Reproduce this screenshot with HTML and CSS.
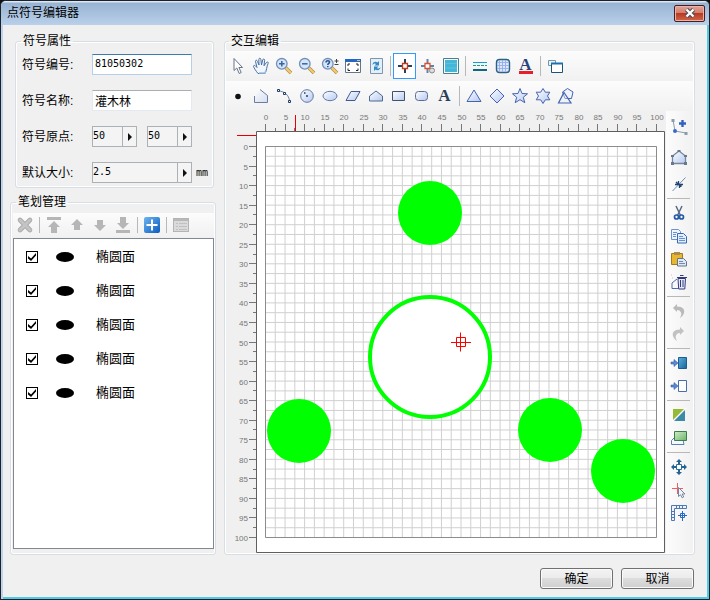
FILE: index.html
```html
<!DOCTYPE html>
<html lang="zh-CN">
<head>
<meta charset="utf-8">
<title>点符号编辑器</title>
<link rel="stylesheet" href="styles.css">
</head>
<body>
<svg class="defs" aria-hidden="true">
  <defs>
    <linearGradient id="soft" x1="0" y1="0" x2="1" y2="1"><stop offset="0" stop-color="#fff"/><stop offset="1" stop-color="#b5c9f0"/></linearGradient>
    <linearGradient id="teal" x1="0" y1="0" x2="1" y2="1"><stop offset="0" stop-color="#5cb0dc"/><stop offset="1" stop-color="#1a649c"/></linearGradient>
    <linearGradient id="blue" x1="0" y1="0" x2="1" y2="1"><stop offset="0" stop-color="#6fb4f0"/><stop offset="1" stop-color="#0a5cc0"/></linearGradient>
    <linearGradient id="green" x1="0" y1="0" x2="1" y2="1"><stop offset="0" stop-color="#d0ecc8"/><stop offset="1" stop-color="#6db56a"/></linearGradient>
    <g id="lens"><path d="M11 11l5 5" stroke="#a58a50" stroke-width="3.600"/><path d="M11 11l5 5" stroke="#f5c96b" stroke-width="2.400"/><circle cx="6.800" cy="6.800" r="5.300" fill="#d3e5fa" stroke="#7590b8" stroke-width="1.300"/></g>
  </defs>
</svg>
<div class="window">
  <header class="titlebar">
    <h1>点符号编辑器</h1>
    <button class="close" aria-label="关闭"><svg width="12" height="10" viewBox="0 0 12 10"><path d="M2.500 1.500l7 7M9.500 1.500l-7 7" stroke="#4a4a5c" stroke-width="4.400"/><path d="M2.500 1.500l7 7M9.500 1.500l-7 7" stroke="#fff" stroke-width="2.400"/></svg></button>
  </header>

  <main class="content">
    <div class="left">
      <fieldset class="group props">
        <legend>符号属性</legend>
        <div class="form">
          <label for="code">符号编号:</label>
          <input class="text focus" id="code" value="81050302">
          <label for="name">符号名称:</label>
          <input class="text" id="name" value="灌木林">
          <label for="ox">符号原点:</label>
          <div class="pair">
            <div class="spin"><input id="ox" value="50"><button aria-label="调整横坐标"></button></div>
            <div class="spin"><input aria-label="纵坐标" value="50"><button aria-label="调整纵坐标"></button></div>
          </div>
          <label for="size">默认大小:</label>
          <div class="spin"><input id="size" value="2.5"><button aria-label="调整大小"></button></div>
          <span class="unit">mm</span>
        </div>
      </fieldset>

      <fieldset class="group strokes">
        <legend>笔划管理</legend>
        <div class="bar small">
          <button aria-label="删除"><svg viewBox="0 0 18 18"><path d="M4 4l10 10M14 4L4 14" stroke="#a8a8a8" stroke-width="4.600" stroke-linecap="round"/><path d="M4 4l10 10M14 4L4 14" stroke="#c4c4c4" stroke-width="3" stroke-linecap="round"/></svg></button>
          <i class="sep"></i>
          <button aria-label="置顶"><svg viewBox="0 0 18 18"><path d="M2 1h14v3H2zM9 5l6 6h-3v6H6v-6H3z" fill="#b6b6b6"/></svg></button>
          <button aria-label="上移"><svg viewBox="0 0 18 18"><path d="M9 3l6 6h-3v5H6V9H3z" fill="#b6b6b6"/></svg></button>
          <button aria-label="下移"><svg viewBox="0 0 18 18"><path d="M9 15l6-6h-3V4H6v5H3z" fill="#b6b6b6"/></svg></button>
          <button aria-label="置底"><svg viewBox="0 0 18 18"><path d="M9 13l6-6h-3V1H6v6H3zM2 14h14v3H2z" fill="#b6b6b6"/></svg></button>
          <i class="sep"></i>
          <button aria-label="添加"><svg viewBox="0 0 18 18"><rect x="1" y="1" width="16" height="16" rx="2" fill="url(#blue)"/><path d="M9 3.500v11M3.500 9h11" stroke="#fff" stroke-width="2"/></svg></button>
          <i class="sep"></i>
          <button aria-label="属性"><svg viewBox="0 0 18 18"><rect x="1.500" y="2.500" width="15" height="13" fill="#dadada" stroke="#b4b4b4"/><path d="M2 4h14" stroke="#b8b8b8" stroke-width="2"/><path d="M4 7.500h2M4 10.500h2M4 13.500h2M7 7.500h8M7 10.500h8M7 13.500h8" stroke="#c0c0c0"/></svg></button>
        </div>
        <ul class="list">
          <li><label><input type="checkbox" checked><span class="dot"></span>椭圆面</label></li>
          <li><label><input type="checkbox" checked><span class="dot"></span>椭圆面</label></li>
          <li><label><input type="checkbox" checked><span class="dot"></span>椭圆面</label></li>
          <li><label><input type="checkbox" checked><span class="dot"></span>椭圆面</label></li>
          <li><label><input type="checkbox" checked><span class="dot"></span>椭圆面</label></li>
        </ul>
      </fieldset>
    </div>

    <fieldset class="group editor">
      <legend>交互编辑</legend>
      <div class="bar">
        <button aria-label="选择"><svg viewBox="0 0 18 18"><path d="M5 1.500v12l2.800-2.500 2.400 5.500 2-1-2.300-5H13.500z" fill="#fff" stroke="#66758c"/></svg></button>
        <button aria-label="平移"><svg viewBox="0 0 18 18"><path d="M6 16.500C4 14 2 11 1.500 9.500c0-1.500 1.500-1.500 2.500 0l1 1L3.500 4.500c0-1.800 1.500-1.700 2 0L7 8 6.800 2.500c0-1.700 1.900-1.700 2.100 0L9.500 8l1.200-5c.4-1.500 2-1.200 1.900.3L12 8.800l2.300-3.200c1-1.300 2.400-.5 1.800.9C14.500 9.500 15 13 13 16.500z" fill="#f2f7ff" stroke="#4a70a0"/><path d="M7 16h6l1-3" stroke="#a0bce0" fill="none" stroke-width="1.500"/></svg></button>
        <button aria-label="放大"><svg viewBox="0 0 18 18"><use href="#lens"/><path d="M6.800 4v5.600M4 6.800h5.600" stroke="#3c639c" stroke-width="1.500"/></svg></button>
        <button aria-label="缩小"><svg viewBox="0 0 18 18"><use href="#lens"/><path d="M4 6.800h5.600" stroke="#3c639c" stroke-width="1.500"/></svg></button>
        <button aria-label="缩放比例"><svg viewBox="0 0 18 18"><use href="#lens"/><path d="M5 5.500C5 3 8.800 3.200 8.500 5.300 8.300 6.500 6.800 6.500 6.800 8M6.800 9v1.300" fill="none" stroke="#2a5288" stroke-width="1.500"/><path d="M15.500 2v4M13.500 4h4M13.500 7.500h4" stroke="#444"/></svg></button>
        <button aria-label="全屏"><svg viewBox="0 0 18 18"><path d="M1.500 2.500h15v13h-15z" fill="#fff" stroke="#67758c"/><path d="M1 3.500h16" stroke="#2466c4" stroke-width="3"/><path d="M13 3.500h3" stroke="#e9c480"/><path d="M4 9V7h2M12 7h2v2M4 11.500v2h2M12 13.500h2v-2" fill="none" stroke="#222"/></svg></button>
        <button aria-label="刷新"><svg viewBox="0 0 18 18"><path d="M3.500 1.500h12v15h-12z" fill="#e2f0fa" stroke="#8095ad"/><path d="M5.500 8c0-3 3-4 5-2.500L12 4v4.500H7.500L9 7c-1-1-2.500-.5-3.500 1zM13.500 10c0 3-3 4-5 2.500L7 14V9.500h4.500L10 11c1 1 2.500.5 3.500-1z" fill="#3588c0"/></svg></button>
        <i class="sep"></i>
        <button class="active" aria-label="原点"><svg viewBox="0 0 18 18"><path d="M9 2v4M9 12v4M2 9h4M12 9h4" stroke="#26415c" stroke-width="2"/><path d="M6.500 6.500h5v5h-5z" fill="#fff" stroke="#c93a1a" stroke-width="1.300"/></svg></button>
        <button aria-label="原点设置"><svg viewBox="0 0 18 18"><path d="M8.500 2v4M8.500 12v4M2 9h4M11 9h4" stroke="#5a86ac" stroke-width="2"/><path d="M6 6.500h5v5H6z" fill="#fff" stroke="#dc5030" stroke-width="1.300"/><circle cx="13" cy="13.500" r="2.500" fill="#ddd" stroke="#888"/></svg></button>
        <button aria-label="背景"><svg viewBox="0 0 18 18"><path d="M1.500 1.500h15v15h-15z" fill="#fff" stroke="#478094"/><path d="M3 3h12v12H3z" fill="#43b7d7"/><path d="M3 7c5-2 7 1 12-1M3 11h12" stroke="#62c4de" fill="none"/></svg></button>
        <i class="sep"></i>
        <button aria-label="线型"><svg viewBox="0 0 18 18"><path d="M2 5.500h14" stroke="#109fd0"/><path d="M2 8.500h14" stroke="#16a08c" stroke-dasharray="3 1"/><path d="M2 13h14" stroke="#126780" stroke-width="2"/></svg></button>
        <button aria-label="填充"><svg viewBox="0 0 18 18"><rect x="2.500" y="2.500" width="13" height="13" rx="3" fill="#dce8ff" stroke="#2d6280" stroke-width="1.400"/><path d="M5.500 3v12M8.500 3v12M11.500 3v12M3 5.500h12M3 8.500h12M3 11.500h12" stroke="#9bb2e8"/></svg></button>
        <button class="glyph underline" aria-label="文字颜色">A</button>
        <i class="sep"></i>
        <button aria-label="窗口"><svg viewBox="0 0 18 18"><path d="M2.500 3.500h7v5h-7z" fill="#e8f3fa" stroke="#7095ac"/><path d="M5.500 6.500h11v9h-11z" fill="#fff" stroke="#1c5274"/><path d="M5 6.500h12" stroke="#1c72b0" stroke-width="2"/></svg></button>
      </div>
      <div class="bar">
        <button aria-label="点"><svg viewBox="0 0 18 18"><circle cx="9" cy="9.500" r="2.800" fill="#111"/></svg></button>
        <button aria-label="折线"><svg viewBox="0 0 18 18"><path d="M8 2.500l7.500 6v7H2.500V9" fill="url(#soft)" stroke="none" opacity=".5"/><path d="M8 2.500l7.500 6v7H2.500V9" fill="none" stroke="#6b7c9c"/></svg></button>
        <button aria-label="曲线"><svg viewBox="0 0 18 18"><path d="M3.500 4C9 4 14 8 14.500 14" fill="none" stroke="#6b7f9c"/><path d="M2.500 2.500h2v2h-2zM8.500 5.500h2v2h-2zM13.500 13.500h2v2h-2z" fill="#fff" stroke="#1e3c68"/></svg></button>
        <button aria-label="圆"><svg viewBox="0 0 18 18"><circle cx="9" cy="9" r="6.300" fill="url(#soft)" stroke="#6079a8"/><path d="M8 9h2M6 6h1.500" stroke="#243c70" stroke-width="1.500"/></svg></button>
        <button aria-label="椭圆"><svg viewBox="0 0 18 18"><ellipse cx="9" cy="9" rx="7" ry="4.700" fill="url(#soft)" stroke="#6079a8"/></svg></button>
        <button aria-label="平行四边形"><svg viewBox="0 0 18 18"><path d="M7 4.500h9l-5 9H2z" fill="url(#soft)" stroke="#405b90"/></svg></button>
        <button aria-label="多边形"><svg viewBox="0 0 18 18"><path d="M2.500 14V9l6.500-5 6.500 5v5z" fill="url(#soft)" stroke="#506894"/></svg></button>
        <button aria-label="矩形"><svg viewBox="0 0 18 18"><path d="M2.500 4.500h12v9h-12z" fill="url(#soft)" stroke="#405070"/></svg></button>
        <button aria-label="圆角矩形"><svg viewBox="0 0 18 18"><rect x="2.500" y="4.500" width="12" height="9" rx="3" fill="url(#soft)" stroke="#586c96"/></svg></button>
        <button class="glyph" aria-label="文字">A</button>
        <i class="sep"></i>
        <button aria-label="三角形"><svg viewBox="0 0 18 18"><path d="M9 3l7 11.500H2z" fill="url(#soft)" stroke="#4564b0"/></svg></button>
        <button aria-label="菱形"><svg viewBox="0 0 18 18"><path d="M9 2l7 7-7 7-7-7z" fill="url(#soft)" stroke="#4564b0"/></svg></button>
        <button aria-label="五角星"><svg viewBox="0 0 18 18"><path d="M9 1.500l2 5 5.500.3-4.200 3.500 1.500 5.400L9 12.700l-4.800 3 1.500-5.400L1.500 6.800 7 6.500z" fill="url(#soft)" stroke="#4564b0"/></svg></button>
        <button aria-label="六角星"><svg viewBox="0 0 18 18"><path d="M9 1.500l2.300 3.700h4.500L13.500 9l2.300 3.800h-4.500L9 16.500l-2.300-3.700H2.200L4.500 9 2.200 5.200h4.500z" fill="url(#soft)" stroke="#4564b0"/></svg></button>
        <button aria-label="组合图形"><svg viewBox="0 0 18 18"><path d="M10.500 1.500l5.500 3.500-1.500 6.500H8L5.500 5z" fill="#eef3ff" stroke="#4564b0"/><path d="M7 5.500l7 10.500H1.500z" fill="#e7efff" fill-opacity=".4" stroke="#4564b0" stroke-width="1.200"/></svg></button>
      </div>
      <div class="workspace">
        <div class="board">
          <svg id="canvas" viewBox="-1 0 440 442" role="img" aria-label="符号画布">
            <path class="sheet" d="M29.500 441.500V20.500h408V441.500z"/>
            <g id="grid"></g>
            <path class="frame" d="M38.500 35.500h391v391h-391z"/>
            <g id="rulers"></g>
            <path class="cursor" d="M68.500 4v16M10 24.500h19"/>
            <circle class="fill" cx="203" cy="102" r="32"/>
            <circle class="ring" cx="203" cy="246" r="60"/>
            <circle class="fill" cx="72" cy="320" r="32"/>
            <circle class="fill" cx="323" cy="319" r="32"/>
            <circle class="fill" cx="396" cy="360" r="32"/>
            <path class="origin" d="M229.500 226.500h9v9h-9zM233.500 221.500v19M224 231.500h20"/>
          </svg>
        </div>
        <div class="side">
          <button class="tall" aria-label="添加节点"><svg viewBox="0 0 18 18"><path d="M3 2l2 11 11 2" stroke="#8d9caf" fill="none"/><path d="M1.500 1h3v3h-3zM14.500 14h3v3h-3z" fill="#8a9bad"/><circle cx="5" cy="13" r="2" fill="#3c68cc"/><path d="M12.500 2v7M9 5.500h7" stroke="#3261c0" stroke-width="2.400"/></svg></button>
          <button class="tall" aria-label="编辑节点"><svg viewBox="0 0 18 18"><path d="M2.500 15.500V8L9 3l6.500 5v7.500z" fill="url(#soft)" stroke="#76879c" stroke-width="1.300"/><path d="M1 7h3v2H1zM7.500 2h3v2h-3zM14 7h3v2h-3zM1 14h3v3H1zM14 14h3v3h-3z" fill="#65788e"/></svg></button>
          <button aria-label="打断"><svg viewBox="0 0 18 18"><path d="M2.500 16L15.500 2.500" stroke="#6c91b8"/><path d="M8.500 6v3.500H5M9.500 13v-3.500H13M8.500 9.500L6 7M9.500 9.500l2 2" stroke="#1f4470" fill="none" stroke-width="1.300"/></svg></button>
          <i class="sep"></i>
          <button aria-label="剪切"><svg viewBox="0 0 18 18"><path d="M6 2l4.500 9.500M12 2L7.500 11.500" stroke="#566b85" stroke-width="1.500"/><circle cx="6.500" cy="13" r="2" fill="none" stroke="#245ba8" stroke-width="1.700"/><circle cx="11.500" cy="13" r="2" fill="none" stroke="#245ba8" stroke-width="1.700"/></svg></button>
          <button aria-label="复制"><svg viewBox="0 0 18 18"><path d="M1.500 2.500h7l2 2v8h-9z" fill="#eef5ff" stroke="#6d94cc"/><path d="M7.500 6.500h6l3 3v6.500h-9z" fill="#e3efff" stroke="#3568b5"/><path d="M3 5.500h4M3 7.500h3M3 9.500h3M9 9.500h4M9 11.500h6M9 13.500h6" stroke="#6992cc"/></svg></button>
          <button aria-label="粘贴"><svg viewBox="0 0 18 18"><path d="M1.500 3.500h11v11h-11z" fill="#e9b72f" stroke="#a5791c"/><path d="M4 2h6v3H4z" fill="#a98d50"/><path d="M7.500 8.500h6l3 3v4.500h-9z" fill="#dfe8f4" stroke="#607792"/><path d="M9 11.500h4M9 13.500h6" stroke="#768da8"/></svg></button>
          <button aria-label="删除图形"><svg viewBox="0 0 18 18"><path d="M2 15.500V10l5-4M2 15.500h6" fill="none" stroke="#476fb0"/><path d="M8 5.500h7.500l-.7 10.500H8.700z" fill="#e4e8ff" stroke="#343c78"/><path d="M7 4.500h10M10 2.500h3.500M10.500 7v7M13 7v7" stroke="#343c78"/><path d="M1 2h1M2 5h1" stroke="#e8b6a8"/></svg></button>
          <i class="sep"></i>
          <button aria-label="撤销"><svg viewBox="0 0 18 18"><path d="M3 6l4-4v2.500c6 0 8 3 7 6.500-.7 2.500-2.500 4-4 5 1-2 1.800-4 1-5.500C10.300 8.800 9 8 7 8v2z" fill="#bababa"/></svg></button>
          <button aria-label="重做"><svg viewBox="0 0 18 18"><path d="M14 6l-4-4v2.500c-6 0-8 3-7 6.500.7 2.500 2.500 4 4 5-1-2-1.800-4-1-5.500C6.700 8.800 8 8 10 8v2z" fill="#c2c2c2"/></svg></button>
          <i class="sep"></i>
          <button aria-label="导入"><svg viewBox="0 0 18 18"><path d="M8.500 3.500h8v11h-8z" fill="url(#teal)" stroke="#1c5c8c"/><path d="M1 8h3V5.500L8 9l-4 3.500V10H1z" fill="#5a88d4" stroke="#3060a8" stroke-width=".6"/></svg></button>
          <button aria-label="导出"><svg viewBox="0 0 18 18"><path d="M8.500 3.500h8v11h-8z" fill="#fff" stroke="#4a6ea8"/><path d="M1 8h3V5.500L8 9l-4 3.500V10H1z" fill="#5a88d4" stroke="#3060a8" stroke-width=".6"/></svg></button>
          <i class="sep"></i>
          <button aria-label="镜像"><svg viewBox="0 0 18 18"><path d="M3 3h11L3 14z" fill="#94ba36"/><path d="M15 4v11H4z" fill="#3b8ba8"/><path d="M2 16L16 2" stroke="#fff"/></svg></button>
          <button aria-label="图层"><svg viewBox="0 0 18 18"><path d="M1.500 15.500v-4l3-3h8l1.500 7z" fill="#f4f8ff" stroke="#5b80b5"/><path d="M4.500 2.500h12v9h-12z" fill="url(#green)" stroke="#3d7c4c"/></svg></button>
          <i class="sep"></i>
          <button aria-label="移动"><svg viewBox="0 0 18 18"><path d="M6.500 6.500h5v5h-5z" fill="#fff" stroke="#2a6b98"/><path d="M9 1l3 3h-2v2H8V4H6zM9 17l3-3h-2v-2H8v2H6zM1 9l3-3v2h2v2H4v2zM17 9l-3-3v2h-2v2h2v2z" fill="#226594"/></svg></button>
          <button aria-label="拾取"><svg viewBox="0 0 18 18"><path d="M7.500 2v11M2 7.500h11" stroke="#f06060"/><path d="M8.500 6.500v9l2-1.700 1.700 3 1.500-.8-1.500-3h2.800z" fill="#f0f4fa" stroke="#78879c"/></svg></button>
          <button aria-label="标尺"><svg viewBox="0 0 18 18"><path d="M1.500 16.500v-15h15v3h-12v12z" fill="#edf4ff" stroke="#4b7ab2"/><path d="M6.500 2v2M9.500 2v2M12.500 2v2M2 7.500h2M2 10.500h2M2 13.500h2" stroke="#4b7ab2"/><path d="M12.500 7v10M8 11.500h9M10.500 9.500h4v4h-4z" fill="none" stroke="#2669c5"/></svg></button>
        </div>
      </div>
    </fieldset>
  </main>

  <footer class="actions">
    <button>确定</button>
    <button>取消</button>
  </footer>
</div>
<script src="canvas.js"></script>
</body>
</html>
```
FILE: styles.css
```css
* { box-sizing: border-box; }

body {
  margin: 0;
  font: 12px/14px "Liberation Sans", "Noto Sans CJK SC", sans-serif;
  color: #000;
  background: #111;
}

button, input { font: inherit; color: inherit; margin: 0; padding: 0; }
button { border: 0; background: none; }
.defs { position: absolute; width: 0; height: 0; }

.window {
  display: flex;
  flex-direction: column;
  min-height: 100vh;
  border: 1px solid #1c2228;
  border-radius: 6px 6px 0 0;
  background: #f0f0f0;
  box-shadow: inset 2px 0 #bdd4ec, inset -2px 0 #4fcbe8, inset 0 -2px #4fcbe8;
}

.titlebar {
  display: flex;
  justify-content: space-between;
  align-items: center;
  height: 24px;
  padding: 0 4px 0 6px;
  border-radius: 5px 5px 0 0;
  background: linear-gradient(#dbe7f5 0 1px, #98b3d2 2px, #b9d0ea);
}
.titlebar h1 { margin: 0; font-size: 12px; font-weight: 400; }

.close {
  display: grid;
  place-items: center;
  width: 31px;
  height: 17px;
  border: 1px solid #481c24;
  border-radius: 2px;
  background: linear-gradient(#e4a394, #d27f6e 45%, #b93a22 50%, #d0664a);
  box-shadow: inset 0 0 0 1px #e9b5a9;
}

.content {
  display: flex;
  flex: 1;
  gap: 8px;
  padding: 9px 14px 0 9px;
}

.left {
  display: flex;
  flex-direction: column;
  gap: 7px;
  flex: 0 0 206px;
}

.group {
  min-width: 0;
  margin: 0;
  padding: 0 2px;
  border: 1px solid #d5dfe5;
  border-radius: 3px;
  box-shadow: inset 0 0 0 1px #fff;
}
.group legend { height: 14px; margin-left: 3px; padding: 0 2px; }

.props { margin: 0 2px 0 5px; padding: 6px 2px 4px 6px; }
.props legend { margin-left: -1px; }
.form {
  display: grid;
  grid-template-columns: 70px 1fr 19px;
  grid-auto-rows: 21px;
  gap: 15px 0;
  align-items: center;
}
.form label { grid-column: 1; }
.form .unit { padding-left: 4px; font: 10px/12px "DejaVu Sans Mono", monospace; }

.text, .spin input {
  width: 100%;
  min-width: 0;
  outline: 0;
  font: 10px/14px "DejaVu Sans Mono", "Noto Sans CJK SC", monospace;
}
.text {
  height: 21px;
  padding: 0 2px 2px;
  border: 1px solid #e3e9ef;
  border-top-color: #abadb3;
  background: #fff;
}
#name { font-size: 12px; padding-bottom: 0; }
.text.focus { border-color: #b5cfe7; border-top-color: #3d7bad; }

.pair { display: grid; grid-template-columns: 1fr 1fr; gap: 10px; }
.spin {
  display: flex;
  height: 21px;
  border: 1px solid #abb1b5;
  background: #f4f4f4;
}
.spin input { flex: 1; padding: 0 0 2px; border: 0; background: none; }
.spin button {
  display: grid;
  place-items: center;
  flex: 0 0 14px;
  border-left: 1px solid #abb1b5;
}
.spin button::before {
  content: "";
  border: 4px solid transparent;
  border-right: 0;
  border-left-color: #111;
}

.strokes { display: flex; flex-direction: column; flex: 1; padding: 4px 1px 5px 2px; }

.bar {
  display: flex;
  align-items: center;
  height: 30px;
  background: linear-gradient(#fcfcfc, #f1f1f1);
}
.bar.small { height: 24px; margin-bottom: 1px; }
.bar button, .side button {
  display: grid;
  place-items: center;
  flex: 0 0 23px;
  height: 26px;
}
.bar button svg, .side button svg { display: block; width: 18px; height: 18px; fill: none; }
.bar .sep { flex: 0 0 6px; height: 20px; }
.bar.small .sep { height: 16px; }
.bar .sep::before {
  content: "";
  display: block;
  width: 1px;
  height: 100%;
  margin-left: 3px;
  background: #b8b8b8;
}
.bar .active { border: 1px solid #3399ff; background: #fff; }

.bar .glyph { font: 700 17px/18px "Liberation Serif", serif; color: #2a4058; }
.bar .underline { align-content: center; line-height: 13px; color: #29437c; }
.bar .underline::after { content: ""; width: 14px; height: 3px; background: #e81e28; }

.list {
  flex: 1;
  margin: 0;
  padding: 1px 0 0;
  border: 1px solid #828790;
  background: #fff;
  list-style: none;
  font-size: 13px;
}
.list label { display: flex; align-items: center; height: 34px; padding-left: 12px; }
.list input {
  display: grid;
  place-items: center;
  width: 12px;
  height: 12px;
  appearance: none;
  border: 1px solid #000;
  background: #fff;
}
.list input:checked::before {
  content: "";
  width: 8px;
  height: 8px;
  background: #000;
  clip-path: polygon(0 38%, 38% 68%, 100% 0, 100% 32%, 38% 100%, 0 70%);
}
.dot { width: 18px; height: 10px; margin: 0 22px 0 18px; border-radius: 50%; background: #000; }

.editor { flex: 1; padding: 3px 1px 0; }
.workspace { display: flex; }
.board { flex: 1; min-width: 0; }
.board svg { display: block; width: 100%; height: auto; }
.side {
  display: flex;
  flex-direction: column;
  flex: 0 0 27px;
  padding: 1px 3px 0 1px;
  background: linear-gradient(90deg, #fcfcfc, #f1f1f1);
}
.side button { flex-basis: 23px; height: 23px; }
.side .tall { flex-basis: 30px; }
.side .sep { height: 6px; padding-top: 3px; }
.side .sep::before { content: ""; display: block; height: 1px; background: #b8b8b8; }

.sheet { fill: #fff; stroke: #5f5f5f; }
.frame { fill: none; stroke: #8c8c8c; }
.grid-line { stroke: #d0d0d0; }
.tick { stroke: #777; shape-rendering: crispEdges; }
.scale { font: 8px "Liberation Sans", sans-serif; fill: #777; }
.cursor { stroke: #e60000; fill: none; }
.fill { fill: #0f0; }
.ring { fill: #fff; stroke: #0f0; stroke-width: 4px; }
.origin { fill: none; stroke: #f00; }

.actions {
  display: flex;
  justify-content: flex-end;
  gap: 8px;
  padding: 13px 15px 10px;
}
.actions button {
  width: 73px;
  height: 21px;
  border: 1px solid #707070;
  border-radius: 3px;
  background: linear-gradient(#f3f3f3, #ebebeb 50%, #dddddd 50%, #cfcfcf);
  box-shadow: inset 0 0 0 1px #fafafa;
}
```
FILE: canvas.js
```javascript
const NS = "http://www.w3.org/2000/svg";
const left = 38.5, top0 = 35.5, size = 391, steps = 40;

function add(parent, tag, attrs, text) {
  const el = document.createElementNS(NS, tag);
  for (const key in attrs) el.setAttribute(key, attrs[key]);
  if (text !== undefined) el.textContent = text;
  parent.appendChild(el);
}

const grid = document.getElementById("grid");
const rulers = document.getElementById("rulers");

for (let i = 0; i <= steps; i++) {
  const offset = i * size / steps;
  const x = left + offset, y = top0 + offset;
  const major = i % 2 === 0;
  const px = Math.floor(x) + 0.5, py = Math.floor(y) + 0.5;
  add(grid, "path", { class: "grid-line", d: `M${x} ${top0}v${size}M${left} ${y}h${size}` });
  add(rulers, "path", { class: "tick", d: `M${px} ${major ? 13 : 17}V20M${major ? 22 : 26} ${py}H29` });
  if (major) {
    const value = i * 2.5;
    add(rulers, "text", { class: "scale", x: px + 0.5, y: 9, "text-anchor": "middle" }, value);
    add(rulers, "text", { class: "scale", x: 21, y: py + 3, "text-anchor": "end" }, value);
  }
}
```
